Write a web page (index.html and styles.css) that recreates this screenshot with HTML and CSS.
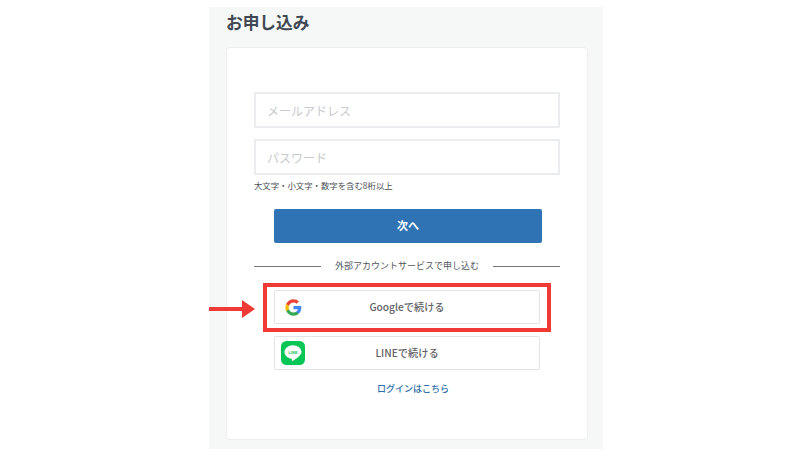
FILE: index.html
```html
<!DOCTYPE html>
<html lang="ja">
<head>
    <title>お申し込み</title>
    <link rel="stylesheet" href="styles.css">
</head>
<body>
    <div class="panel">
        <h1>お申し込み</h1>
        <div class="card">
            <form class="signup-form">
                <input class="field" type="text" placeholder="メールアドレス">
                <input class="field field-password" type="text" placeholder="パスワード">
                <p class="hint">大文字・小文字・数字を含む8桁以上</p>
                <button class="next-btn" type="button">次へ</button>
            </form>

            <div class="divider"><span>外部アカウントサービスで申し込む</span></div>

            <!-- Social buttons -->
            <div class="social">
                <button class="social-btn" type="button">
                    <svg class="google-icon" viewBox="0 0 48 48" width="17" height="17">
                        <path fill="#4285F4" d="M46 24.5c0-1.6-.1-3.100-.4-4.500H24v8.700h12.400c-.5 2.800-2.100 5.200-4.500 6.800v5.600h7.300C43.400 36.700 46 31.100 46 24.500z"/>
                        <path fill="#34A853" d="M24 47c6.100 0 11.300-2 15.100-5.500l-7.300-5.600c-2 1.400-4.600 2.200-7.800 2.200-6 0-11-4-12.800-9.500H3.600v5.800C7.400 42 15.100 47 24 47z"/>
                        <path fill="#FBBC05" d="M11.200 28.600c-.5-1.400-.7-2.900-.7-4.600s.3-3.200.7-4.600v-5.800H3.600C2.100 16.600 1 20.200 1 24s1.100 7.400 2.600 10.400l7.600-5.800z"/>
                        <path fill="#EA4335" d="M24 9.900c3.400 0 6.400 1.200 8.700 3.400l6.500-6.500C35.300 3.200 30.100 1 24 1 15.100 1 7.400 6 3.600 13.600l7.600 5.800C13 13.900 18 9.900 24 9.900z"/>
                    </svg>
                    Googleで続ける
                </button>
                <button class="social-btn line-btn" type="button">
                    <svg class="line-icon" viewBox="0 0 24 24" width="24" height="24">
                        <rect width="24" height="24" rx="5.500" fill="#06C755"/>
                        <path fill="#fff" d="M12 4.300c-4.700 0-8.500 3-8.500 6.800 0 3.300 3 6.100 7 6.700.6.100.5.500.4 1.300 0 .4-.2 1.100.6.800 1.200-.5 4.300-2.400 6.200-4.300 1.500-1.400 2.800-2.800 2.800-4.500 0-3.800-3.800-6.800-8.500-6.800z"/>
                        <text class="line-text" x="12" y="12.800" text-anchor="middle">LINE</text>
                    </svg>
                    LINEで続ける
                </button>
            </div>

            <a class="login-link" href="#">ログインはこちら</a>
        </div>
    </div>

    <!-- Annotation drawn over the screenshot -->
    <div class="highlight"></div>
    <svg class="arrow" viewBox="0 0 46 18" width="46" height="18">
        <rect x="0" y="7" width="34" height="4" fill="#EF3A36"/>
        <polygon points="33,0 46,9 33,18" fill="#EF3A36"/>
    </svg>
</body>
</html>
```

FILE: styles.css
```css
body {
    font-family: "Noto Sans CJK JP", "Noto Sans", sans-serif;
    background: #fff;
    color: #3c4550;
    margin: 0;
    height: 457px;
    overflow: hidden;
    position: relative;
}

.panel {
    box-sizing: border-box;
    width: 394px;
    height: 442px;
    margin: 7px 0 0 209px;
    padding: 0 15px 9px 17px;
    background: #f6f8f8;
    display: flex;
    flex-direction: column;
}

h1 {
    font-size: 16.700px;
    line-height: 30px;
    height: 40px;
    margin: 0;
    font-weight: 700;
    color: #3f4852;
}

.card {
    box-sizing: border-box;
    flex: 1;
    background: #fff;
    border: 1px solid #eceeef;
    border-radius: 4px;
    padding: 44px 27px 0 27px;
    display: flex;
    flex-direction: column;
}

.signup-form {
    display: flex;
    flex-direction: column;
}

.field {
    box-sizing: border-box;
    height: 36px;
    padding: 0 11px;
    border: 2px solid #ebeced;
    border-radius: 1px;
    font-family: inherit;
    font-size: 12px;
    outline: none;
}

.field::placeholder {
    color: #c8cacc;
}

.field-password {
    margin-top: 11px;
}

.hint {
    font-size: 8.400px;
    line-height: 12px;
    margin: 4px 0 0 0;
    color: #4a4f55;
}

.next-btn {
    align-self: center;
    width: 268px;
    height: 34px;
    margin: 18px 0 0 2px;
    padding: 0 0 2px 0;
    border: none;
    border-radius: 2px;
    background: #2f73b5;
    color: #fff;
    font-family: inherit;
    font-size: 11px;
    font-weight: 700;
    cursor: pointer;
}

.divider {
    display: flex;
    align-items: center;
    gap: 14px;
    margin-top: 15px;
    font-size: 9px;
    line-height: 16px;
    color: #50565c;
}

.divider::before,
.divider::after {
    content: "";
    flex: 1;
    height: 1px;
    background: #77797c;
}

.social {
    display: flex;
    flex-direction: column;
    gap: 12px;
    align-self: center;
    width: 266px;
    margin: 16px 0 0 0;
}

.social-btn {
    position: relative;
    height: 34px;
    padding: 0 0 2px 0;
    border: 1px solid #e2e4e5;
    border-radius: 2px;
    background: #fff;
    color: #5f6265;
    font-family: inherit;
    font-size: 10.200px;
    font-weight: 500;
    cursor: pointer;
}

.google-icon {
    position: absolute;
    left: 10px;
    top: 8px;
}

.line-icon {
    position: absolute;
    left: 6px;
    top: 4px;
}

.line-text {
    font-family: "Liberation Sans", sans-serif;
    font-size: 4px;
    font-weight: 700;
    fill: #06C755;
}

.login-link {
    align-self: center;
    margin: 12px 0 0 12px;
    font-size: 9px;
    line-height: 14px;
    font-weight: 500;
    color: #2c6ea8;
    text-decoration: none;
}

.highlight {
    position: absolute;
    box-sizing: border-box;
    left: 263px;
    top: 283px;
    width: 288px;
    height: 49px;
    border: 4px solid #EF3A36;
}

.arrow {
    position: absolute;
    left: 209px;
    top: 300px;
}
```
